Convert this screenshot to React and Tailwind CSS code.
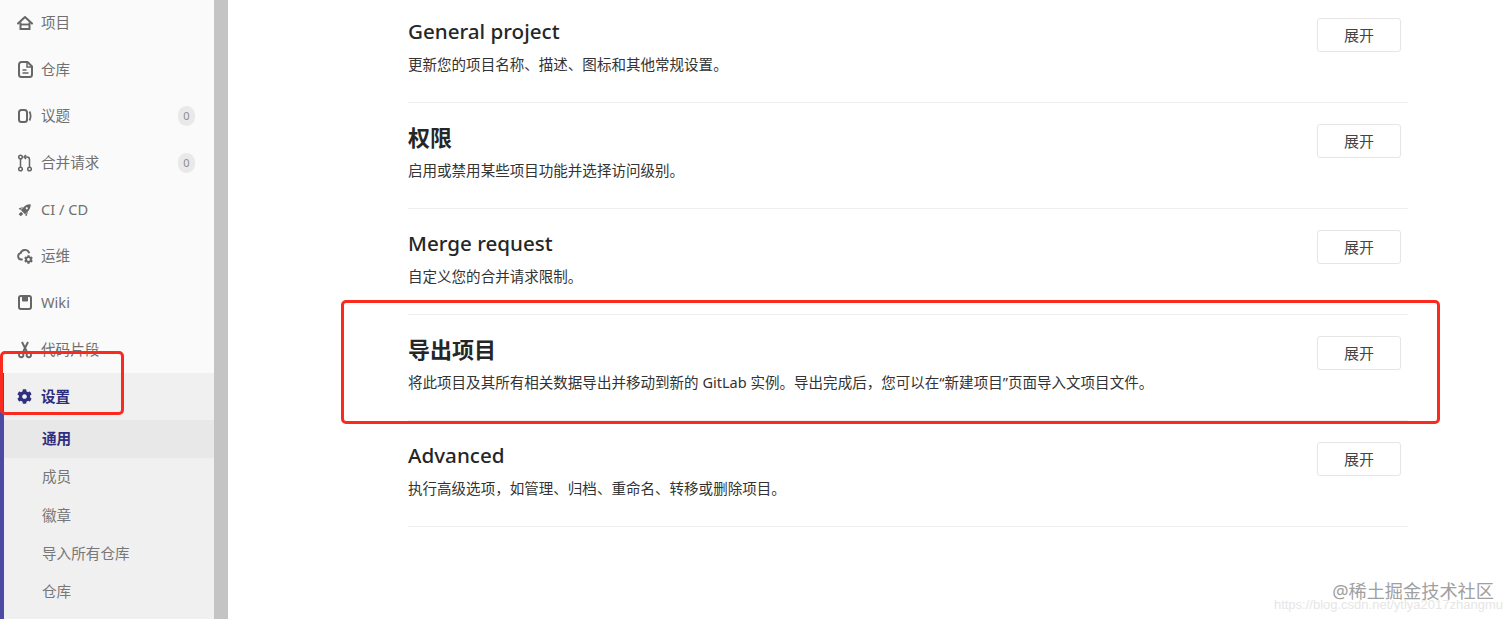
import { FaCog } from "react-icons/fa";

const fontStack = "font-['Noto_Sans','Noto_Sans_CJK_SC',sans-serif]";

const HomeIcon = () => (
  <svg width="16" height="16" viewBox="0 0 16 16" fill="none" stroke="#666" strokeWidth="2">
    <path d="M1 8.500L8 2l7 6.500" strokeLinecap="round" strokeLinejoin="round" />
    <path d="M3.500 7.500v6.500h9V7.500" />
    <path d="M3.500 9.500h9" strokeWidth="1.800" />
  </svg>
);

const FileIcon = () => (
  <svg width="15" height="17" viewBox="0 0 15 17" fill="none" stroke="#666" strokeWidth="2">
    <path d="M3.500 1h6l4.500 4.500v8a2.500 2.500 0 0 1-2.500 2.500h-8a2.500 2.500 0 0 1-2.500-2.500v-10a2.500 2.500 0 0 1 2.500-2.500z" />
    <path d="M9 1.500v4.500h4.500" strokeWidth="1.500" />
    <path d="M4.500 9h4M4.500 12h6" strokeWidth="1.300" />
  </svg>
);

const IssueIcon = () => (
  <svg width="14" height="16" viewBox="0 0 14 16" fill="none" stroke="#666" strokeWidth="2">
    <rect x="1" y="2" width="8" height="12" rx="2.500" />
    <path d="M11.500 3.500c1.500 3 1.500 6 0 9" strokeWidth="1.800" />
  </svg>
);

const MergeIcon = () => (
  <svg width="14" height="18" viewBox="0 0 14 18" fill="none" stroke="#666" strokeWidth="1.500">
    <circle cx="2.500" cy="3" r="1.800" />
    <circle cx="2.500" cy="15" r="1.800" />
    <circle cx="11.500" cy="15" r="1.800" />
    <path d="M2.500 5v8M11.500 13V5.500a2.500 2.500 0 0 0-2.500-2.500H6.500" />
    <path d="M8 1L6 3l2 2" />
  </svg>
);

const RocketIcon = () => (
  <svg width="16" height="16" viewBox="0 0 16 16" fill="#666">
    <g transform="rotate(45 8 8)">
      <path d="M8 0c2.300 2 3 4.500 3 7v4H5V7c0-2.500.700-5 3-7z" />
      <path d="M4.500 7L2.500 11.500h2zM11.500 7l2 4.500h-2z" />
      <path d="M6.500 12h3v3.500h-3z" />
      <circle cx="8" cy="5.500" r="1.100" fill="#fafafa" />
    </g>
  </svg>
);

const CloudIcon = () => (
  <svg width="16" height="16" viewBox="0 0 16 16" fill="none" stroke="#666" strokeWidth="1.900">
    <path d="M5 11.500H4.200A3.200 3.200 0 0 1 3.600 5.200 4.500 4.500 0 0 1 12 4.500" strokeLinecap="round" />
    <FaCog x="7" y="7" size="9" color="#666" stroke="none" />
  </svg>
);

const WikiIcon = () => (
  <svg width="14" height="15" viewBox="0 0 14 15" fill="none" stroke="#666" strokeWidth="2">
    <rect x="1" y="1" width="12" height="13" rx="2" />
    <path d="M4.500 1.500v4.500h5V1.500" strokeWidth="1" fill="#666" />
  </svg>
);

const ScissorsIcon = () => (
  <svg width="14" height="18" viewBox="0 0 14 18" fill="none" stroke="#666" strokeWidth="1.900">
    <circle cx="3.200" cy="14" r="2.200" />
    <circle cx="10.800" cy="14" r="2.200" />
    <path d="M4.500 12L10 1M9.500 12L4 1" />
  </svg>
);

const mainNav = [
  { label: "项目", icon: <HomeIcon /> },
  { label: "仓库", icon: <FileIcon /> },
  { label: "议题", icon: <IssueIcon />, count: 0 },
  { label: "合并请求", icon: <MergeIcon />, count: 0 },
  { label: "CI / CD", icon: <RocketIcon /> },
  { label: "运维", icon: <CloudIcon /> },
  { label: "Wiki", icon: <WikiIcon /> },
  { label: "代码片段", icon: <ScissorsIcon /> },
];

const subNav = ["成员", "徽章", "导入所有仓库", "仓库"];

const sections = [
  { title: "General project", desc: "更新您的项目名称、描述、图标和其他常规设置。" },
  { title: "权限", desc: "启用或禁用某些项目功能并选择访问级别。", bold: true },
  { title: "Merge request", desc: "自定义您的合并请求限制。" },
  {
    title: "导出项目",
    desc: "将此项目及其所有相关数据导出并移动到新的 GitLab 实例。导出完成后，您可以在“新建项目”页面导入文项目文件。",
    bold: true,
  },
  { title: "Advanced", desc: "执行高级选项，如管理、归档、重命名、转移或删除项目。" },
];

const Sidebar = () => (
  <aside className="w-[214px] shrink-0 bg-[#fafafa] overflow-hidden">
    <div className="-mt-[0.500px]">
      {mainNav.map((item) => (
        <div key={item.label} className="h-[46.700px] flex items-center pl-[17px] pr-[19px] text-[14.600px] text-[#707070]">
          <span className="w-[16px] flex justify-center shrink-0">{item.icon}</span>
          <span className="ml-[8px] flex-1">{item.label}</span>
          {item.count !== undefined && (
            <span className="w-[17px] h-[20px] rounded-full bg-[#e9e9e9] text-[11px] text-[#8c8c8c] flex items-center justify-center">
              {item.count}
            </span>
          )}
        </div>
      ))}
    </div>
    <div className="bg-[#f0f0f0] border-l-[4px] border-[#4b4ba3] h-[260px]">
      <div className="h-[47px] flex items-center pl-[13px] text-[14.600px] font-bold text-[#2f2f80]">
        <FaCog size={15} color="#2f2f80" />
        <span className="ml-[9px]">设置</span>
      </div>
      <div className="h-[38px] bg-[#e8e8e8] flex items-center pl-[38px] text-[14.600px] font-bold text-[#2f2f80]">
        通用
      </div>
      {subNav.map((label) => (
        <div key={label} className="h-[38.400px] flex items-center pl-[38px] text-[14.600px] text-[#777]">
          {label}
        </div>
      ))}
    </div>
  </aside>
);

const Section = ({ title, desc, bold, first }) => (
  <section className={`flex justify-between border-b border-[#eeeeee] pr-[7px] ${first ? "h-[103px] pt-[18px]" : "h-[106px] pt-[21px]"}`}>
    <div>
      <h4 className={`h-[28px] -mt-px leading-[28px] text-[#262626] ${bold ? "text-[22px] font-bold" : "text-[20.600px] font-medium"}`}>{title}</h4>
      <p className="mt-[7.500px] text-[14.540px] leading-[22px] text-[#333]">{desc}</p>
    </div>
    <button className="w-[84px] h-[34px] border border-[#e5e5e5] rounded-[3px] bg-white text-[15px] text-[#444]">
      展开
    </button>
  </section>
);

export default function App() {
  return (
    <div className={`relative h-[619px] w-[1512px] overflow-hidden flex bg-white ${fontStack}`}>
      <Sidebar />
      <div className="w-[14px] shrink-0 bg-[#c4c4c4]" />
      <main className="ml-[180px] w-[1000px]">
        {sections.map((s, i) => (
          <Section key={s.title} {...s} first={i === 0} />
        ))}
      </main>

      <div className="absolute left-0 top-[351px] w-[124px] h-[64px] border-[3px] border-[#fa2a1e] rounded-[5px]" />
      <div className="absolute left-[341px] top-[300px] w-[1099px] h-[124px] border-[3px] border-[#fa2a1e] rounded-[5px]" />

      <div className="absolute right-[18px] top-[581px] text-[18.200px] leading-[20px] text-[#a0a0a0]">@稀土掘金技术社区</div>
      <div className="absolute right-[9px] top-[599px] text-[13px] leading-[12px] text-[#e6e6e6] font-['Liberation_Sans',sans-serif]">
        https://blog.csdn.net/ytlya2017zhangmu
      </div>
    </div>
  );
}
